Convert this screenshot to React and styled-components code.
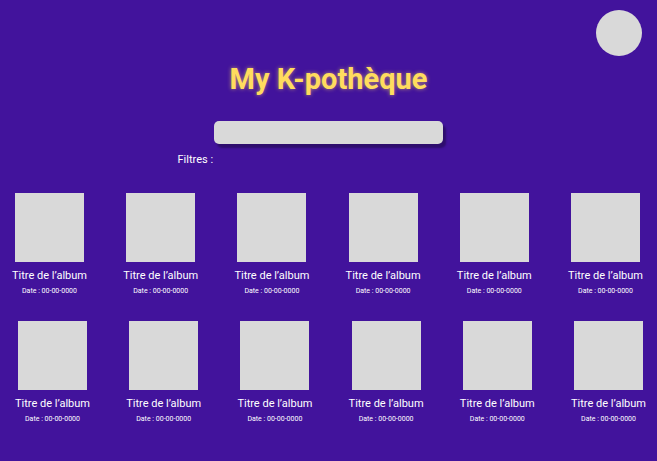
import React from "react";
import styled, { createGlobalStyle } from "styled-components";

const GlobalStyle = createGlobalStyle`
  *, *::before, *::after { box-sizing: border-box; }
  html { background: #42139c; }
  body { margin: 0; font-family: Roboto, "Liberation Sans", sans-serif; color: #fff; }
`;

const Page = styled.div`
  display: flex;
  flex-direction: column;
  min-height: 100vh;
  background: #42139c;
`;

const TopBar = styled.header`
  display: flex;
  justify-content: flex-end;
  padding: 10px 15px 0;
`;

const ProfileButton = styled.button`
  width: 46px;
  height: 46px;
  padding: 0;
  border: 0;
  border-radius: 50%;
  background: #d9d9d9;
  cursor: pointer;
`;

const Title = styled.h1`
  margin: 5px 0 0;
  font-size: 29px;
  line-height: 36px;
  font-weight: 700;
  text-align: center;
  color: #ffdc5e;
  text-shadow: 0 0 4px rgba(255, 220, 94, 0.6);
`;

const SearchForm = styled.form`
  display: flex;
  flex-direction: column;
  width: 100%;
  max-width: 302px;
  margin: 24px auto 0;
`;

const SearchInput = styled.input`
  width: 76%;
  height: 23px;
  margin: 0 auto;
  padding: 0 8px;
  border: 0;
  border-radius: 5px;
  background: #d9d9d9;
  box-shadow: 3px 4px 2px rgba(0, 0, 0, 0.3);
  font: inherit;
  font-size: 11px;
`;

const Filters = styled.p`
  margin: 8px 0 0;
  font-size: 11px;
  line-height: 16px;
`;

const Collection = styled.main`
  display: flex;
  flex-direction: column;
  gap: 25px;
  padding: 25px 0 32px;
`;

const Shelf = styled.ul`
  display: flex;
  justify-content: space-between;
  margin: 0;
  padding: ${({ $indented }) => ($indented ? "0 11px 0 15px" : "0 14px 0 12px")};
  list-style: none;
`;

const Album = styled.li`
  display: flex;
  flex-direction: column;
  align-items: center;
`;

const Cover = styled.div`
  width: 69px;
  height: 69px;
  background: #d9d9d9;
`;

const AlbumTitle = styled.h2`
  margin: 6px 0 0;
  font-size: 11px;
  line-height: 16px;
  font-weight: 400;
  white-space: nowrap;
`;

const AlbumDate = styled.p`
  margin: 2px 0 0;
  font-size: 7px;
  line-height: 10px;
  white-space: nowrap;
`;

const album = { title: "Titre de l’album", date: "00-00-0000" };
const shelves = [
  { id: "first", indented: false, albums: Array(6).fill(album) },
  { id: "second", indented: true, albums: Array(6).fill(album) },
];

export default function App() {
  return (
    <>
      <GlobalStyle />
      <Page>
        <TopBar>
          <ProfileButton type="button" aria-label="Profil" />
        </TopBar>
        <Title>My K-pothèque</Title>
        <SearchForm role="search" onSubmit={(event) => event.preventDefault()}>
          <SearchInput type="search" aria-label="Rechercher un album" />
          <Filters>Filtres :</Filters>
        </SearchForm>
        <Collection>
          {shelves.map((shelf) => (
            <Shelf key={shelf.id} $indented={shelf.indented}>
              {shelf.albums.map(({ title, date }, index) => (
                <Album key={index}>
                  <Cover />
                  <AlbumTitle>{title}</AlbumTitle>
                  <AlbumDate>Date : {date}</AlbumDate>
                </Album>
              ))}
            </Shelf>
          ))}
        </Collection>
      </Page>
    </>
  );
}
